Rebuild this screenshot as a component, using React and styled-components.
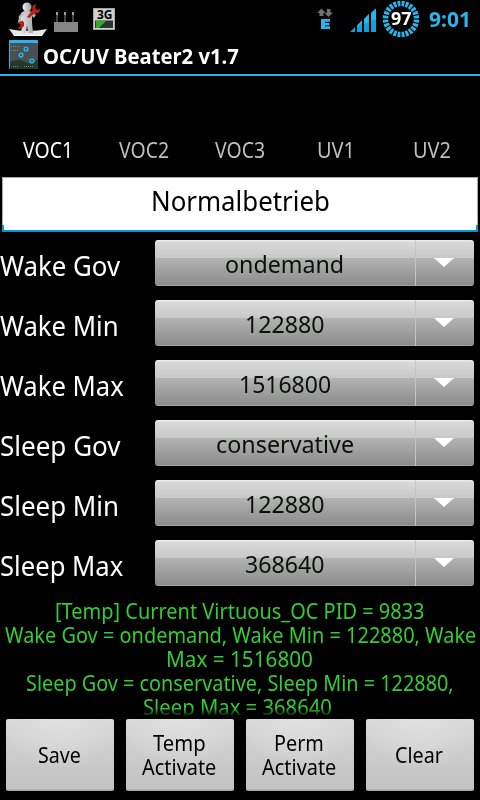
import React, { useLayoutEffect, useRef, useState } from "react";
import styled, { createGlobalStyle } from "styled-components";

const Global = createGlobalStyle`
  body { margin: 0; background: #000; }
  * { box-sizing: border-box; }
`;

const BLUE = "#2bb4ea";

const Screen = styled.main`
  width: 480px;
  height: 800px;
  display: flex;
  flex-direction: column;
  overflow: hidden;
  background: #000;
  color: #fff;
  font-family: "Noto Sans", "Open Sans", sans-serif;
`;

const FitBox = styled.span`
  display: block;
  flex: none;
  width: ${(p) => p.$w}px;
  white-space: pre;
`;
const FitInner = styled.span`
  display: inline-block;
  transform-origin: 0 50%;
`;

/* Text condensed to a given advance width */
function Fit({ w, children }) {
  const ref = useRef(null);
  const [k, setK] = useState(1);
  useLayoutEffect(() => {
    setK(w / ref.current.offsetWidth);
  }, [w, children]);
  return (
    <FitBox $w={w}>
      <FitInner ref={ref} style={{ transform: `scaleX(${k})` }}>{children}</FitInner>
    </FitBox>
  );
}

const StatusBar = styled.header`
  flex: none;
  height: 38px;
  display: flex;
  justify-content: space-between;
  align-items: flex-start;
`;
const StatusRight = styled.div`
  display: flex;
`;
const Clock = styled.div`
  width: 51px;
  color: ${BLUE};
  font-size: 22px;
  font-weight: 700;
  line-height: 36px;
`;
const Ring = styled.div`
  position: relative;
  width: 48px;
  height: 38px;
`;
const Percent = styled.div`
  position: absolute;
  left: 10px;
  top: 0;
  font-size: 17px;
  font-weight: 700;
  line-height: 38px;
`;
const Art = styled.svg`
  display: block;
  flex: none;
`;
const NetLabel = styled.text`
  font-family: "Noto Sans", "Open Sans", sans-serif;
  font-weight: 700;
`;

const TitleBar = styled.div`
  flex: none;
  height: 38px;
  display: flex;
  align-items: flex-start;
  gap: 5px;
  padding-left: 9px;
  border-bottom: 2px solid ${BLUE};
  font-size: 21px;
  font-weight: 700;
  line-height: 36px;
`;
const AppIcon = styled(Art)`
  margin-top: 2px;
`;

const Tabs = styled.nav`
  flex: none;
  height: 101px;
  padding-top: 50px;
  display: grid;
  grid-template-columns: repeat(5, 96px);
`;
const Tab = styled.div`
  display: flex;
  justify-content: center;
  line-height: 48px;
  font-size: 21px;
  color: ${(p) => (p.$on ? "#fff" : "#bebebe")};
`;

const Field = styled.div`
  flex: none;
  height: 55px;
  margin: 0 2px 8px;
  display: flex;
  justify-content: center;
  background:
    linear-gradient(#0099cc, #0099cc) 0 100% / 2px 5px no-repeat,
    linear-gradient(#0099cc, #0099cc) 100% 100% / 2px 5px no-repeat,
    linear-gradient(#aaa, #aaa) 0 0 / 1px 100% no-repeat,
    linear-gradient(#aaa, #aaa) 100% 0 / 1px 100% no-repeat,
    #fff;
  border-top: 1px solid #aaa;
  border-bottom: 2px solid #0099cc;
  color: #000;
  font-size: 27px;
  line-height: 46px;
`;

const Row = styled.div`
  flex: none;
  height: 60px;
  display: grid;
  grid-template-columns: 155px 319px;
  align-items: start;
`;
const Label = styled.div`
  font-size: 27px;
  line-height: 51px;
`;
const Spinner = styled.div`
  height: 46px;
  display: grid;
  grid-template-columns: 260px 59px;
  border-radius: 3px;
  overflow: hidden;
  color: #0a0f0a;
  background: linear-gradient(#ececec 0 1px, #d9d9d9 2px, #c8c8c8 18px, #b3b3b3 18px, #8c8c8c 45px, #a2a2a2 45px);
  font-size: 24px;
  line-height: 48px;
`;
const Value = styled.div`
  display: flex;
  justify-content: center;
  padding-right: 1px;
`;
const Drop = styled.div`
  border-left: 1px solid #c4c4c4;
  padding: 18px 0 0 18px;
`;

const Log = styled.section`
  flex: none;
  height: 117px;
  margin-top: -1px;
  margin-bottom: 3px;
  overflow: hidden;
  display: flex;
  flex-direction: column;
  align-items: flex-start;
  color: #32cd32;
  font-size: 21px;
  line-height: 24px;
  mask-image: linear-gradient(#000 0 109px, transparent 118px);
`;
const LogLine = styled.div`
  flex: none;
  height: 24px;
  padding-left: ${(p) => p.$x}px;
`;

const Actions = styled.footer`
  display: grid;
  grid-template-columns: repeat(4, 108px);
  gap: 12px;
  padding: 0 6px;
`;
const Action = styled.button`
  height: 72px;
  padding: 0 2px 0 0;
  border: 0;
  border-radius: 2px;
  display: flex;
  flex-direction: column;
  align-items: center;
  justify-content: center;
  color: #000;
  background: radial-gradient(ellipse 60% 70% at 50% 0, #e0e0e0, transparent), linear-gradient(#d6d6d6, #c2c2c2 70px, #a8a8a8 71px);
  font: 21px/24px "Noto Sans", "Open Sans", sans-serif;
`;

const tabs = [["VOC1", 50], ["VOC2", 50], ["VOC3", 50], ["UV1", 38], ["UV2", 38]];
const rows = [
  ["Wake Gov", 120.5, "ondemand", 119],
  ["Wake Min", 119, "122880", 79],
  ["Wake Max", 123.5, "1516800", 92],
  ["Sleep Gov", 120.5, "conservative", 138],
  ["Sleep Min", 119, "122880", 79],
  ["Sleep Max", 123.5, "368640", 79],
];
const log = [
  ["[Temp] Current Virtuous_OC PID = 9833", 55, 370],
  ["Wake Gov = ondemand, Wake Min = 122880, Wake", 5, 471],
  ["Max = 1516800", 166, 147],
  ["Sleep Gov = conservative, Sleep Min = 122880,", 26, 428],
  ["Sleep Max = 368640", 143, 189],
];
const actions = [[["Save", 43]], [["Temp", 53], ["Activate", 74]], [["Perm", 50], ["Activate", 74]], [["Clear", 48]]];

const Notifications = () => (
  <Art width="130" height="38">
    <defs>
      <linearGradient id="body"><stop stopColor="#f0f0f0" /><stop offset="1" stopColor="#9c9c9c" /></linearGradient>
    </defs>
    {/* mechanic on a tray */}
    <path d="M9 29L14 36H42L47 29Q38 31 28 31T9 29Z" fill="#e6e6e6" />
    <path d="M14 35.5H42" stroke="#fff" />
    <circle cx="27" cy="7" r="4.5" fill="url(#body)" />
    <path d="M22 12Q27 10 33 12L36 15L34 18L32 16V22L33 33H28L27 25L26 33H21L23 20L20 24L18 22Z" fill="url(#body)" />
    <path d="M23 13L20 17L20 22" stroke="#bbb" strokeWidth="2.5" fill="none" />
    <path d="M27 17L32.500 10Q31 5 36 4L35 8L37 10L40 9Q40 14 35 13L29 18Z" fill="#b5221c" />
    <path d="M17 23Q20 20 24 22V26Q22 29 18 29L19 27L21 26L20 24Z" fill="#b5221c" />
    {/* router */}
    <path d="M54 22H78V32H54Z" fill="#858585" />
    <path d="M57 15V22M65 15V22M73 15V22" stroke="#8a8a8a" />
    <path d="M57 12V15M65 12V15M73 12V15" stroke="#e0e0e0" strokeWidth="1.4" />
    {/* mobile data monitor */}
    <rect x="93.5" y="8.5" width="21" height="21" fill="#cfcfcf" stroke="#a5a5a5" />
    <NetLabel x="97" y="18.5" fontSize="12" textLength="15.5" lengthAdjust="spacingAndGlyphs" fill="#000">3G</NetLabel>
    <path d="M95 20.500H113V28H95Z" fill="#24392a" />
    <path d="M96 21H106L99 28H96Z" fill="#2fae25" />
  </Art>
);

const Radio = () => (
  <Art width="68" height="38">
    <path d="M8.5 8.500L13 13H10.5V16H6.5V13H4ZM15.500 17L20 12.500H17.5V9H14V12.500H11Z" fill="#707070" />
    <path d="M8 19H17V21.800H12V23H16.500V25.500H12V26.300H17V29H8Z" fill={BLUE} />
    <path d="M37 32L42 27V32ZM44 32V25.5L49 20.5V32ZM51 32V19L56 14V32ZM58 32V13L63 8.500V32Z" fill="#149fd6" />
    <path d="M44 26V25.5L49 20.5V24ZM51 24V19L56 14V22ZM58 21V13L63 8.500V19Z" fill={BLUE} />
  </Art>
);

const circuit = [[17, 9], [12, 15], [23, 21]];

export default function App() {
  return (
    <Screen>
      <Global />
      <StatusBar>
        <Notifications />
        <StatusRight>
          <Radio />
          <Ring>
            <Art width="48" height="38">
              <circle cx="20" cy="19" r="15.500" fill="none" stroke={BLUE} strokeWidth="5.500" pathLength="240" strokeDasharray="7 3" strokeDashoffset="-1.500" />
            </Art>
            <Percent><Fit w={20}>97</Fit></Percent>
          </Ring>
          <Clock><Fit w={42}>9:01</Fit></Clock>
        </StatusRight>
      </StatusBar>
      <TitleBar>
        <AppIcon width="29" height="29">
          <path d="M0 0H29V29H0Z" fill="#4a4f52" />
          <path d="M1 22Q9 18 16 22T29 19V29H1Z" fill="#25382a" />
          <path d="M2 6.500H12M2 10.500H9M15 26.500H25M4 26.500H9" stroke="#7d8183" strokeDasharray="1 1" />
          <path d="M17 9L12 15V18M23 21L18 19" stroke="#1d7396" fill="none" />
          {circuit.map(([x, y]) => <circle key={x} cx={x} cy={y} r="1.800" fill="#174b63" stroke={BLUE} strokeWidth="1.500" />)}
          <path d="M0 1L1 0H28L29 1V3H1V28H0Z" fill={BLUE} />
        </AppIcon>
        <Fit w={195.5}>OC/UV Beater2 v1.7</Fit>
      </TitleBar>
      <Tabs>
        {tabs.map(([t, w], i) => <Tab key={t} $on={i === 0}><Fit w={w}>{t}</Fit></Tab>)}
      </Tabs>
      <Field><Fit w={179}>Normalbetrieb</Fit></Field>
      {rows.map(([l, lw, v, vw]) => (
        <Row key={l}>
          <Label><Fit w={lw}>{l}</Fit></Label>
          <Spinner>
            <Value><Fit w={vw}>{v}</Fit></Value>
            <Drop><Art width="21" height="10"><path d="M0 0H20L10 9Z" fill="#fff" /></Art></Drop>
          </Spinner>
        </Row>
      ))}
      <Log>
        {log.map(([t, x, w]) => <LogLine key={t} $x={x}><Fit w={w}>{t}</Fit></LogLine>)}
      </Log>
      <Actions>
        {actions.map((lines, i) => (
          <Action key={i}>{lines.map(([t, w]) => <Fit key={t} w={w}>{t}</Fit>)}</Action>
        ))}
      </Actions>
    </Screen>
  );
}
